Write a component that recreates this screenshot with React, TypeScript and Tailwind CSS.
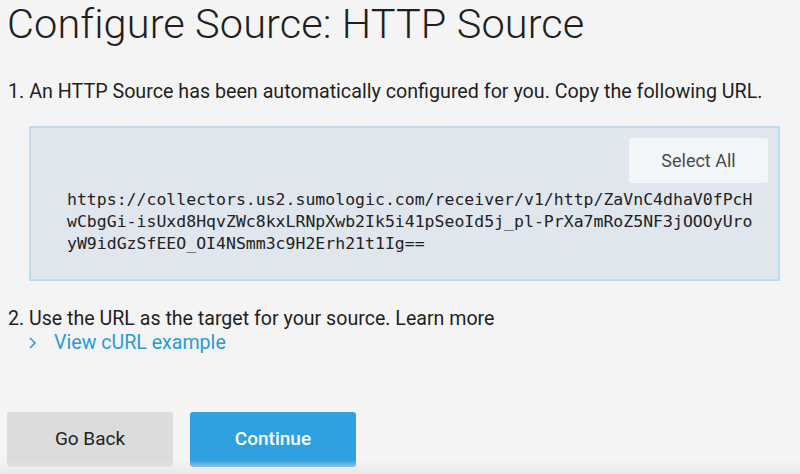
import React from 'react';

const url =
  'https://collectors.us2.sumologic.com/receiver/v1/http/ZaVnC4dhaV0fPcHwCbgGi-isUxd8HqvZWc8kxLRNpXwb2Ik5i41pSeoId5j_pl-PrXa7mRoZ5NF3jOOOyUroyW9idGzSfEEO_OI4NSmm3c9H2Erh21t1Ig==';

export default function App() {
  return (
    <div className="relative h-[474px] w-[800px] overflow-hidden bg-[#f4f4f4] font-['Roboto',sans-serif] text-[#1f1f1f]">
      <h1 className="pl-[7px] pt-0 text-[41.5px] font-light leading-[48px] tracking-[0.1px]">
        Configure Source: HTTP Source
      </h1>

      <p className="mt-[32px] pl-[8px] text-[19.7px] leading-[24px]">
        1. An HTTP Source has been automatically configured for you. Copy the following URL.
      </p>

      {/* url box */}
      <div className="ml-[29px] mt-[22px] h-[155px] w-[751px] border-2 border-[#bcdcf0] bg-[#dfe6ed] pt-[10px] pr-[10px]">
        <div className="flex justify-end">
          <button
            type="button"
            className="h-[45px] w-[139px] rounded-[3px] bg-[#f3f6f9] text-[18px] text-[#4a4a4a]"
          >
            Select All
          </button>
        </div>
        <pre className="mt-[6px] whitespace-pre-wrap break-all pl-[36px] pr-[14px] font-['DejaVu_Sans_Mono',monospace] text-[16.5px] leading-[22px] text-[#222]">
          {url}
        </pre>
      </div>

      <p className="mt-[26px] pl-[8px] text-[19.6px] leading-[24px]">
        2. Use the URL as the target for your source. Learn more
      </p>
      <div className="flex items-center pl-[28px] text-[19.6px] leading-[24px] text-[#2a9ad9]">
        <svg width="10" height="14" viewBox="0 0 10 14" className="mr-[16px]">
          <path d="M2 2 L7 7 L2 12" fill="none" stroke="#2a9ad9" strokeWidth="1.6" />
        </svg>
        <span>View cURL example</span>
      </div>

      <div className="mt-[57px] flex gap-[17px] pl-[7px]">
        <button
          type="button"
          className="h-[55px] w-[166px] rounded-[3px] bg-[#dcdcdc] text-[19px] text-[#222]"
        >
          Go Back
        </button>
        <button
          type="button"
          className="h-[55px] w-[166px] rounded-[3px] bg-[#2fa0e0] text-[19px] font-medium text-white"
        >
          Continue
        </button>
      </div>

      <div className="pointer-events-none absolute bottom-0 left-0 h-[14px] w-full bg-gradient-to-b from-transparent to-[#e9e9e9]" />
    </div>
  );
}
